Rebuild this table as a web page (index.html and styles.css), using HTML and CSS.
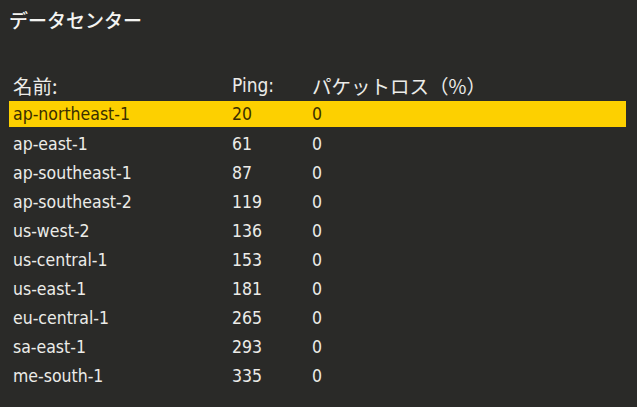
FILE: index.html
```html
<!DOCTYPE html>
<html lang="ja">
<head>
<meta charset="utf-8">
<link rel="stylesheet" href="styles.css">
</head>
<body>
<div class="panel">
  <h1 class="title">データセンター</h1>
  <div class="table">
    <div class="row head"><span class="c-name">名前:</span><span class="c-ping">Ping:</span><span class="c-loss">パケットロス（%）</span></div>
    <div class="row sel"><span class="c-name">ap-northeast-1</span><span class="c-ping">20</span><span class="c-loss">0</span></div>
    <div class="row"><span class="c-name">ap-east-1</span><span class="c-ping">61</span><span class="c-loss">0</span></div>
    <div class="row"><span class="c-name">ap-southeast-1</span><span class="c-ping">87</span><span class="c-loss">0</span></div>
    <div class="row"><span class="c-name">ap-southeast-2</span><span class="c-ping">119</span><span class="c-loss">0</span></div>
    <div class="row"><span class="c-name">us-west-2</span><span class="c-ping">136</span><span class="c-loss">0</span></div>
    <div class="row"><span class="c-name">us-central-1</span><span class="c-ping">153</span><span class="c-loss">0</span></div>
    <div class="row"><span class="c-name">us-east-1</span><span class="c-ping">181</span><span class="c-loss">0</span></div>
    <div class="row"><span class="c-name">eu-central-1</span><span class="c-ping">265</span><span class="c-loss">0</span></div>
    <div class="row"><span class="c-name">sa-east-1</span><span class="c-ping">293</span><span class="c-loss">0</span></div>
    <div class="row"><span class="c-name">me-south-1</span><span class="c-ping">335</span><span class="c-loss">0</span></div>
  </div>
</div>
</body>
</html>
```
FILE: styles.css
```css
html, body {
  margin: 0;
  padding: 0;
  background: #2a2a28;
}
.panel {
  width: 637px;
  height: 407px;
  box-sizing: border-box;
  padding: 8px 11px 0 9px;
  color: #f2f2f0;
  font-family: "DejaVu Sans Condensed", "DejaVu Sans", "Noto Sans CJK JP", sans-serif;
}
.title {
  margin: 0;
  font-family: "Noto Sans CJK JP", sans-serif;
  font-weight: 500;
  font-size: 19px;
  line-height: 24px;
  color: #f4f4f2;
}
.table {
  margin-top: 41px;
}
.row {
  display: flex;
  align-items: center;
  height: 29px;
  padding-left: 4px;
  font-size: 17.5px;
  color: #ecece8;
}
.row.head {
  height: 24px;
  margin-bottom: 4px;
  font-size: 19px;
}
.row.head .c-name, .row.head .c-loss {
  font-family: "Noto Sans CJK JP", sans-serif;
  font-size: 19.5px;
  font-weight: 400;
}
.row.sel {
  height: 26px;
  margin-bottom: 2px;
  background: #fdd000;
  color: #3a2e00;
}
.c-name { width: 219px; }
.c-ping { width: 80px; }
.c-loss { flex: 1; }
```
